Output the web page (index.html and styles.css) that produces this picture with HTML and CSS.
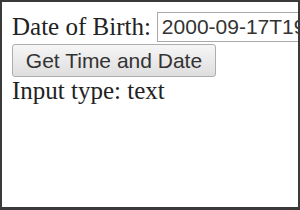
FILE: index.html
```html
<!DOCTYPE html>
<html lang="en">
<head>
    <meta charset="UTF-8">
    <title>Date of Birth</title>
    <link rel="stylesheet" href="styles.css">
</head>
<body>
    <div class="frame">
        <div class="row">
            <label for="dob">Date of Birth:</label>
            <input type="text" id="dob" value="2000-09-17T19:30">
        </div>
        <button class="get-btn">Get Time and Date</button>
        <p class="result">Input type: text</p>
    </div>
</body>
</html>
```
FILE: styles.css
```css
body {
    margin: 0;
    background-color: #fff;
}
.frame {
    width: 300px;
    height: 210px;
    box-sizing: border-box;
    border: 2px solid #3a3a3a;
    border-bottom-width: 3px;
    padding: 10px 0 0 10px;
    overflow: hidden;
    color: #222;
}
.row {
    display: flex;
    align-items: center;
    white-space: nowrap;
}
label {
    font-family: "Liberation Serif", serif;
    font-size: 25px;
}
#dob {
    flex-shrink: 0;
    width: 200px;
    height: 30px;
    box-sizing: border-box;
    margin-left: 6px;
    padding: 0 4px;
    border: 1px solid #a9a9a9;
    font-family: "Liberation Sans", sans-serif;
    font-size: 21px;
    color: #333;
}
.get-btn {
    display: block;
    width: 204px;
    height: 33px;
    margin-top: 2px;
    padding: 0;
    border: 1px solid #adadad;
    border-radius: 3px;
    background: linear-gradient(#f6f6f6, #dedede);
    font-family: "Liberation Sans", sans-serif;
    font-size: 21px;
    color: #333;
}
.result {
    margin: 0;
    font-family: "Liberation Serif", serif;
    font-size: 25px;
}
```
